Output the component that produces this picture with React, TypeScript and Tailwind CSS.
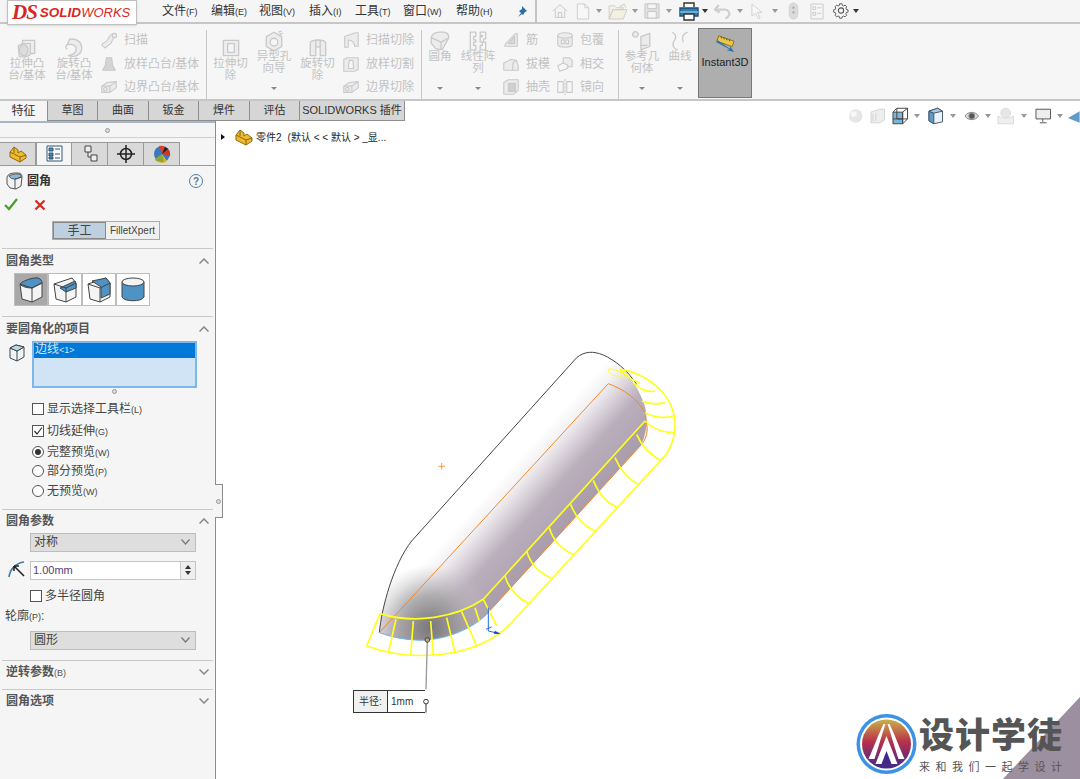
import type { ReactNode } from "react";

const F = "#c9c9c9";
const FILL = "#ececec";

// faded ribbon icons
const Glyph = ({ kind, size = 20 }: { kind: string; size?: number }) => {
  const p = { fill: FILL, stroke: F, strokeWidth: 1.2, strokeLinejoin: "round" as const };
  return (
    <svg width={size} height={size} viewBox="0 0 20 20" className="shrink-0">
      {kind === "extrude" && (
        <g {...p}>
          <path d="M6 3h11v12H6z" />
          <path d="M2 8l4-2h7v10l-4 2H3z" />
          <ellipse cx="7" cy="12" rx="4" ry="5" fill="#dcdcdc" />
        </g>
      )}
      {kind === "revolve" && (
        <g {...p}>
          <path d="M6 2c7-1 11 3 11 8 0 6-6 9-12 7 5-1 7-3 7-6 0-3-3-5-8-4z" />
          <path d="M4 7c-2 1-2 3 0 4" fill="none" />
        </g>
      )}
      {kind === "sweep" && (
        <g {...p}>
          <path d="M2 16c0-4 6-3 7-7 1-3 3-6 7-6l2 4c-3 0-4 2-5 5-1 4-6 4-7 7z" />
          <circle cx="16" cy="5" r="2.4" />
        </g>
      )}
      {kind === "loft" && (
        <g {...p}>
          <path d="M7 3h6l1 8 3 6H3l3-6z" fill="#d4d4d4" />
        </g>
      )}
      {kind === "boundary" && (
        <g {...p}>
          <path d="M2 9l6-4 10-1v7l-7 5H2z" />
          <path d="M2 9h9l7-5M11 9v7" fill="none" />
          <circle cx="6" cy="12.500" r="2" />
        </g>
      )}
      {kind === "cut" && (
        <g {...p}>
          <path d="M3 3h14v14H3z" />
          <path d="M7 6h6v8H7z" fill="#f6f6f6" />
        </g>
      )}
      {kind === "hole" && (
        <g {...p}>
          <path d="M3 6l7-4 7 4v9l-7 4-7-4z" />
          <circle cx="10" cy="11" r="3.500" fill="#f6f6f6" />
          <path d="M14 2l3-1M15 4l3-1" fill="none" />
        </g>
      )}
      {kind === "revcut" && (
        <g {...p}>
          <path d="M3 5c2-3 12-3 14 0v12h-5V9H8v8H3z" />
          <path d="M8 3v6M12 3v6" fill="none" />
        </g>
      )}
      {kind === "sweepcut" && (
        <g {...p}>
          <path d="M3 18V6l12-4h3v15h-4c0-4-3-7-7-7v8z" />
        </g>
      )}
      {kind === "loftcut" && (
        <g {...p}>
          <path d="M2 5l4-2h12v13l-4 2H2z" />
          <path d="M8 6h4l1 9H7z" fill="#f6f6f6" />
        </g>
      )}
      {kind === "fillet" && (
        <g {...p}>
          <path d="M2 7c1-4 4-5 8-5h3c3 0 5 2 5 5L12 18l-6-1-4-5z" />
          <path d="M2 7l9 4 7-4M11 11v7" fill="none" />
        </g>
      )}
      {kind === "pattern" && (
        <g {...p} fill="none">
          <path d="M3 2h5v4H6v3h2v2H6v3h2v4H3zM12 2h5v6h-2v3h2v7h-5v-4h2v-3h-2V6h2V5h-2z" />
        </g>
      )}
      {kind === "rib" && (
        <g {...p}>
          <path d="M3 17h14V3h-2L4 14z" />
          <path d="M7 14l7-8v8z" fill="#d8d8d8" />
        </g>
      )}
      {kind === "draft" && (
        <g {...p}>
          <path d="M2 9l8-4 6 1 2 6v5H2z" />
          <path d="M12 9l4-3M12 9v8" fill="none" />
        </g>
      )}
      {kind === "shell" && (
        <g {...p}>
          <path d="M2 5l5-3h11v12l-5 4H2z" />
          <path d="M7 6h8v9H7z" fill="#cfcfcf" />
        </g>
      )}
      {kind === "wrap" && (
        <g {...p}>
          <path d="M2 5v10c0 4 16 4 16 0V5z" />
          <ellipse cx="10" cy="5" rx="8" ry="3" />
          <path d="M6 10h3v4H6zM11 10h3v4h-3z" fill="#f6f6f6" />
        </g>
      )}
      {kind === "intersect" && (
        <g {...p}>
          <path d="M8 3h7l3 3v7h-6l-4-3z" />
          <path d="M2 12l6-3 5 2v4l-9 3z" fill="#f6f6f6" />
        </g>
      )}
      {kind === "mirror" && (
        <g {...p}>
          <path d="M2 4h6v12H2zM12 4h6v12h-6z" fill="none" />
          <path d="M10 1v18" fill="none" strokeDasharray="3 1" />
        </g>
      )}
      {kind === "refgeo" && (
        <g {...p}>
          <circle cx="4" cy="4" r="2.500" />
          <path d="M9 6l8-3v12l-8 3z" />
          <path d="M9 14h6" fill="none" />
        </g>
      )}
      {kind === "curve" && (
        <g {...p} fill="none">
          <path d="M3 2c5 3 3 6 1 9-1 3 0 6 4 7M17 2c-4 1-6 5-4 9" />
        </g>
      )}
    </svg>
  );
};

const Big = ({ kind, lines, w, caret, high }: { kind: string; lines: string[]; w: number; caret?: boolean; high?: boolean }) => (
  <div className={`relative flex h-full shrink-0 flex-col items-center ${high ? "pt-[6px]" : "pt-[13px]"}`} style={{ width: w }}>
    <Glyph kind={kind} size={22} />
    <div className="mt-[-2px] flex flex-col items-center whitespace-nowrap text-[11.5px] leading-[12px] text-[#c2c2c2]">
      {lines.map((l) => (
        <div key={l}>{l}</div>
      ))}
    </div>
    {caret && <div className="absolute bottom-[9px] h-0 w-0 border-x-[3px] border-t-[3px] border-x-transparent border-t-[#888]" />}
  </div>
);

const Small = ({ kind, label }: { kind: string; label: string }) => (
  <div className="flex h-[24px] items-center gap-[6px] whitespace-nowrap text-[12px] text-[#c2c2c2]">
    <Glyph kind={kind} size={18} />
    <span>{label}</span>
  </div>
);

const SmallCol = ({ items, w }: { items: [string, string][]; w: number }) => (
  <div className="flex shrink-0 flex-col pt-[4px]" style={{ width: w }}>
    {items.map(([k, l]) => (
      <Small key={l} kind={k} label={l} />
    ))}
  </div>
);

const Sep = ({ mx }: { mx: string }) => <div className={`my-[6px] h-[70px] w-px shrink-0 bg-[#c8c8c8] ${mx}`} />;

const menus: [string, string, number][] = [
  ["文件", "(F)", 49],
  ["编辑", "(E)", 48],
  ["视图", "(V)", 50],
  ["插入", "(I)", 46],
  ["工具", "(T)", 48],
  ["窗口", "(W)", 53],
  ["帮助", "(H)", 60],
];

const tabs: [string, number][] = [
  ["草图", 50],
  ["曲面", 51],
  ["钣金", 50],
  ["焊件", 51],
  ["评估", 50],
  ["SOLIDWORKS 插件", 105],
];

const Caret = ({ c = "#999", ml = "ml-[6px]" }: { c?: string; ml?: string }) => (
  <svg width="6" height="4" viewBox="0 0 6 4" className={`shrink-0 ${ml}`}>
    <path d="M0 0h6L3 4z" fill={c} />
  </svg>
);

const PartIcon = ({ size = 18 }: { size?: number }) => (
  <svg width={size} height={size} viewBox="0 0 18 18" stroke="#8a6a10" strokeLinejoin="round">
    <path d="M1 7l4-5 4 3v3l3-2 5 4v3l-6 4-10-5z" fill="#f1b92d" />
    <path d="M1 7l10 5 6-2M11 12v5M5 2v6" fill="none" />
  </svg>
);

const QuickBar = () => (
  <div className="flex items-center">
    <svg width="16" height="16" viewBox="0 0 20 18" className="ml-[15px]" fill="#f2f2f2" stroke="#c9c9c9" strokeWidth="1.2">
      <path d="M1 9l9-8 9 8M4 7v10h12V7M8 17v-6h4v6" />
    </svg>
    <svg width="14" height="17" viewBox="0 0 14 18" className="ml-[8px]" fill="#f7f7f7" stroke="#cdcdcd">
      <path d="M1 1h8l4 4v12H1zM9 1v4h4" />
    </svg>
    <Caret />
    <svg width="21" height="17" viewBox="0 0 22 18" className="ml-[6px]" fill="#f3f0e2" stroke="#cdcdcd">
      <path d="M1 3h6l2 2h7v2H5l-4 10zM1 17l4-10h15l-4 10zM12 4l5-3 2 4" />
    </svg>
    <Caret ml="ml-[3px]" />
    <svg width="16" height="16" viewBox="0 0 17 17" className="ml-[6px]" fill="#e2e2e2" stroke="#c4c4c4">
      <path d="M1 1h15v15H1z" />
      <path d="M4 1h9v5H4zM4 9h9v7H4z" fill="#f6f6f6" />
    </svg>
    <Caret />
    <svg width="20" height="19" viewBox="0 0 20 19" className="ml-[7px]" fill="none" strokeWidth="1.4">
      <path d="M5 5V1h10v4" fill="#fff" stroke="#333" />
      <path d="M1 6h18v8H1z" fill="#2f7fb5" stroke="#1e4f78" />
      <path d="M1 10h18" stroke="#8dc1e2" />
      <path d="M5 12h10v6H5z" fill="#fff" stroke="#333" />
    </svg>
    <Caret c="#333" ml="ml-[3px]" />
    <svg width="17" height="15" viewBox="0 0 18 16" className="ml-[6px]" fill="none" stroke="#cfcfcf" strokeWidth="2.400">
      <path d="M2 6h9c4 0 6 3 5 6-1 2-2 3-4 3" />
      <path d="M5 1L1 6l5 3" />
    </svg>
    <Caret />
    <svg width="12" height="16" viewBox="0 0 13 17" className="ml-[8px]" fill="#f8f8f8" stroke="#cfcfcf">
      <path d="M1 1l11 9H7l3 6-2 1-3-6-4 3z" />
    </svg>
    <Caret ml="ml-[9px]" />
    <svg width="11" height="18" viewBox="0 0 11 19" className="ml-[10px]" fill="#dcdcdc" stroke="#d0d0d0">
      <rect x="1" y="1" width="9" height="17" rx="4.500" />
      <circle cx="5.500" cy="6" r="1.500" fill="#aaa" />
      <circle cx="5.500" cy="11" r="1.500" fill="#aaa" />
    </svg>
    <svg width="14" height="17" viewBox="0 0 15 18" className="ml-[11px]" fill="#f5f5f5" stroke="#c9c9c9">
      <path d="M1 1h13v16H1zM3 4h3v3H3zM8 5h4M3 10h3v3H3zM8 11h4" />
    </svg>
    <svg width="16" height="16" viewBox="0 0 18 18" className="ml-[9px]" fill="none" stroke="#555" strokeWidth="1.200">
      <path d="M7.500 1h3l.4 2 1.800.8 1.700-1.100 2.100 2.100-1.100 1.700.8 1.800 2 .4v3l-2 .4-.8 1.800 1.100 1.700-2.100 2.100-1.700-1.100-1.800.8-.4 2h-3l-.4-2-1.800-.8-1.700 1.100-2.100-2.100 1.100-1.700-.8-1.800-2-.4v-3l2-.4.8-1.800-1.100-1.700 2.100-2.100 1.700 1.100 1.800-.8z" transform="scale(.88) translate(1 0)" />
      <circle cx="9" cy="8.500" r="3" />
    </svg>
    <Caret c="#333" ml="ml-[4px]" />
  </div>
);

const Section = ({ title, open = true, children }: { title: ReactNode; open?: boolean; children?: ReactNode }) => (
  <div className="mx-[2px] border-t border-[#c9c9c9]">
    <div className="flex h-[23px] items-center justify-between pl-[4px] pr-[4px] text-[12px] font-bold text-[#555]">
      <span>{title}</span>
      <svg width="10" height="6" viewBox="0 0 10 6" fill="none" stroke="#888" strokeWidth="1.500">
        <path d={open ? "M0.500 5.500L5 1l4.500 4.500" : "M0.500 0.500L5 5l4.500-4.500"} />
      </svg>
    </div>
    {children}
  </div>
);

const Check = ({ checked, label, sub, className = "" }: { checked?: boolean; label: string; sub?: string; className?: string }) => (
  <div className={`flex items-center gap-[3px] text-[12px] text-[#444] ${className}`}>
    <div className="flex h-[12px] w-[12px] items-center justify-center border border-[#555] bg-white">
      {checked && (
        <svg width="10" height="10" viewBox="0 0 10 10" fill="none" stroke="#333" strokeWidth="1.200">
          <path d="M1.500 5l2.500 3 5-6.500" />
        </svg>
      )}
    </div>
    <span>
      {label}
      {sub && <span className="text-[9px]">{sub}</span>}
    </span>
  </div>
);

const Radio = ({ checked, label, sub }: { checked?: boolean; label: string; sub: string }) => (
  <div className="flex h-[19.5px] items-center gap-[3px] text-[12px] text-[#444]">
    <div className="flex h-[12px] w-[12px] items-center justify-center rounded-full border border-[#555] bg-white">
      {checked && <div className="h-[6px] w-[6px] rounded-full bg-[#333]" />}
    </div>
    <span>
      {label}
      <span className="text-[9px]">{sub}</span>
    </span>
  </div>
);

const Select = ({ label }: { label: string }) => (
  <div className="ml-[28px] flex h-[19px] w-[166px] items-center justify-between border border-[#bdbdbd] bg-[#dedede] pl-[3px] pr-[5px] text-[12px] text-[#444]">
    <span>{label}</span>
    <svg width="9" height="6" viewBox="0 0 9 6" fill="none" stroke="#777" strokeWidth="1.200">
      <path d="M0.500 0.500L4.500 5l4-4.500" />
    </svg>
  </div>
);

// fillet type thumbnails
const FilletType = ({ v, active }: { v: number; active?: boolean }) => (
  <div className={`flex h-[33px] w-[34px] items-center justify-center border border-[#bcbcbc] ${active ? "bg-[#a8a8a8]" : "bg-white"}`}>
    <svg width="26" height="27" viewBox="0 0 26 27" stroke="#444" strokeWidth="1" strokeLinejoin="round">
      {v === 3 ? (
        <g>
          <path d="M2 6v15c2 5 20 5 22 0V6z" fill="#4f92c4" />
          <ellipse cx="13" cy="6" rx="11" ry="4" fill="#f3f3f3" />
        </g>
      ) : (
        <g>
          <path d="M2 8l18-6 4 5v14l-10 5-10-3z" fill="#f4f4f4" />
          {v === 0 && <path d="M2 8c2-3 14-7 18-6 3 1 4 3 4 5l-10 5c-4 0-10-1-12-4z" fill="#4f92c4" />}
          {v === 1 && <path d="M8 12l15-7 1 3v4l-10 4z" fill="#4f92c4" />}
          {v === 2 && <path d="M6 5l14-3 4 5v11l-9 4V11z" fill="#4f92c4" />}
          <path d="M2 8l12 4v14M14 12l10-5" fill="none" />
        </g>
      )}
    </svg>
  </div>
);

const PanelTab = ({ children, active }: { children: ReactNode; active?: boolean }) => (
  <div className={`flex h-[23px] w-[36px] items-center justify-center border-r border-t border-[#9a9a9a] ${active ? "border-l bg-[#f5f5f5] pb-px" : "bg-[#d9d9d9]"}`}>
    {children}
  </div>
);

const LeftPanel = () => (
  <div className="flex w-[216px] shrink-0 flex-col border-r border-[#8c8c8c] bg-[#f5f5f5]">
    <div className="h-[2px] bg-[#a9b6c2]" />
    <div className="flex h-[15px] items-center justify-center border-b border-[#d0d0d0]">
      <div className="h-[5px] w-[5px] rounded-full border border-[#999] bg-[#ddd]" />
    </div>
    <div className="mt-[4px] flex border-b border-[#9a9a9a]">
      <PanelTab>
        <PartIcon />
      </PanelTab>
      <PanelTab active>
        <svg width="17" height="17" viewBox="0 0 17 17" stroke="#2c5572">
          <path d="M1 1h15v15H1z" fill="#fff" />
          <path d="M3 3h4v3H3zM3 8h4v3H3zM3 12h4v2H3z" fill="#4e8ab8" />
          <path d="M9 4h5M9 9h5M9 13h5" />
        </svg>
      </PanelTab>
      <PanelTab>
        <svg width="18" height="18" viewBox="0 0 18 18" stroke="#444" fill="#eee">
          <path d="M4 1h6v6H4zM7 7v5h3M10 10h6v6h-6z" />
        </svg>
      </PanelTab>
      <PanelTab>
        <svg width="18" height="18" viewBox="0 0 18 18" stroke="#222" strokeWidth="1.500" fill="none">
          <circle cx="9" cy="9" r="5.500" />
          <path d="M9 0v18M0 9h18" />
        </svg>
      </PanelTab>
      <PanelTab>
        <svg width="18" height="18" viewBox="0 0 18 18">
          <circle cx="9" cy="9" r="8" fill="#3c78c0" />
          <path d="M9 9L2 14a8 8 0 0 0 12 2z" fill="#e6b11e" />
          <path d="M9 9l8 2a8 8 0 0 0-5-9z" fill="#c73a2a" />
          <path d="M9 9L6 1a8 8 0 0 1 6 1z" fill="#d8432e" />
          <path d="M9 9l3-7 3 2z" fill="#222" />
          <path d="M9 9l-7 5 1 2 8 1z" fill="#5aa54a" opacity=".7" />
        </svg>
      </PanelTab>
    </div>

    <div className="flex h-[28px] items-center justify-between pl-[6px] pr-[12px] pt-[2px] text-[12px] font-bold text-[#333]">
      <div className="flex items-center gap-[3px]">
        <svg width="18" height="18" viewBox="0 0 18 18" stroke="#555" strokeLinejoin="round">
          <path d="M1 5c1-3 4-4 8-4h3c3 0 4 2 4 4l-1 9-5 3-6-1-3-4z" fill="#f2f2f2" />
          <path d="M3 4c3-2 10-3 12-1 1 2-3 4-6 4-3 0-5-1-6-3z" fill="#8ab8da" />
          <path d="M9 7v10M9 7l7-2" fill="none" />
        </svg>
        <span>圆角</span>
      </div>
      <div className="flex h-[14px] w-[14px] items-center justify-center rounded-full border-[1.500px] border-[#5a7c96] text-[10px] font-bold text-[#5a7c96]">?</div>
    </div>
    <div className="flex h-[21px] items-center gap-[16px] pl-[4px]">
      <svg width="14" height="13" viewBox="0 0 14 13" fill="none" stroke="#46a02a" strokeWidth="2.200">
        <path d="M1 7l4 4 8-10" />
      </svg>
      <svg width="12" height="12" viewBox="0 0 12 12" fill="none" stroke="#d8281c" strokeWidth="2.200">
        <path d="M1.500 1.500l9 9M10.500 1.500l-9 9" />
      </svg>
    </div>
    <div className="mb-[8px] ml-[52px] mt-[6px] flex h-[19px] w-[108px] border border-[#aaa] text-[#444]">
      <div className="flex w-[53px] items-center justify-center border border-[#888] bg-[#bed0e0] text-[12px]">手工</div>
      <div className="flex flex-1 items-center justify-center bg-[#f0f0f0] text-[10px]">FilletXpert</div>
    </div>

    <Section title="圆角类型">
      <div className="mb-[10px] ml-[12px] mt-[1px] flex">
        <FilletType v={0} active />
        <FilletType v={1} />
        <FilletType v={2} />
        <FilletType v={3} />
      </div>
    </Section>

    <Section title="要圆角化的项目">
      <div className="mt-[1px] flex pl-[7px]">
        <svg width="16" height="18" viewBox="0 0 16 18" className="mt-[3px]" stroke="#444" strokeLinejoin="round">
          <path d="M1 4l6-3 8 2v10l-7 4-7-3z" fill="#eef4f8" />
          <path d="M1 4l7 3v10M8 7l7-4" fill="none" />
          <path d="M1 4l6-3 8 2-7 4z" fill="#b8d8ec" />
        </svg>
        <div className="ml-[7px] h-[47px] w-[165px] border-2 border-[#7db6e8] bg-[#d1e4f6]">
          <div className="h-[15px] bg-[#0078d7] pl-[1px] text-[12px] leading-[13px] text-[#d5e8f8]">
            边线<span className="text-[9px]">&lt;1&gt;</span>
          </div>
        </div>
      </div>
      <div className="my-[1px] ml-[110px] h-[5px] w-[5px] rounded-full border border-[#999] bg-[#ddd]" />
      <Check label="显示选择工具栏" sub="(L)" className="ml-[30px] mt-[5px] h-[20px]" />
      <Check checked label="切线延伸" sub="(G)" className="ml-[30px] mt-[1px] h-[22px]" />
      <div className="ml-[30px] pb-[8px]">
        <Radio checked label="完整预览" sub="(W)" />
        <Radio label="部分预览" sub="(P)" />
        <Radio label="无预览" sub="(W)" />
      </div>
    </Section>

    <Section title="圆角参数">
      <Select label="对称" />
      <div className="mt-[9px] flex items-center pl-[6px]">
        <svg width="18" height="18" viewBox="0 0 18 18" fill="none" className="mr-[4px]">
          <path d="M1 16C2 8 8 2 16 1" stroke="#3d7ea6" strokeWidth="1.600" />
          <path d="M6 5l10 10M6 5h5M6 5v5" stroke="#222" strokeWidth="1.500" />
        </svg>
        <div className="flex h-[19px] w-[166px] items-center justify-between border border-[#c4c4c4] bg-white pl-[2px] text-[11px] text-[#5a3d7a]">
          <span>1.00mm</span>
          <div className="flex h-full w-[15px] flex-col items-center justify-center gap-[2px] border-l border-[#ccc] bg-[#eee]">
            <div className="h-0 w-0 border-x-[3px] border-b-[4px] border-x-transparent border-b-[#333]" />
            <div className="h-0 w-0 border-x-[3px] border-t-[4px] border-x-transparent border-t-[#333]" />
          </div>
        </div>
      </div>
      <Check label="多半径圆角" className="ml-[28px] mt-[6px] h-[20px]" />
      <div className="ml-[3px] mt-[1px] h-[18px] text-[12px] text-[#444]">
        轮廓<span className="text-[9px]">(P)</span>:
      </div>
      <div className="mb-[10px] mt-[6px]">
        <Select label="圆形" />
      </div>
    </Section>
    <Section open={false} title={<>逆转参数<span className="text-[9px] font-normal">(B)</span></>}>
      <div className="h-[5px]" />
    </Section>
    <Section open={false} title="圆角选项" />
  </div>
);

const Model = () => (
  <svg width="864" height="659" viewBox="216 120 864 659" className="absolute inset-0">
    <defs>
      <linearGradient id="body" gradientUnits="userSpaceOnUse" x1="430" y1="470" x2="640" y2="660">
        <stop offset="0" stopColor="#ffffff" />
        <stop offset=".15" stopColor="#f4f2f4" />
        <stop offset=".5" stopColor="#baaebc" />
        <stop offset="1" stopColor="#ad9fad" />
      </linearGradient>
      <radialGradient id="end" gradientUnits="userSpaceOnUse" cx="270" cy="860" r="190">
        <stop offset="0" stopColor="#767676" />
        <stop offset=".5" stopColor="#a6a4a6" stopOpacity=".85" />
        <stop offset="1" stopColor="#c8c4c8" stopOpacity="0" />
      </radialGradient>
      <linearGradient id="logoFill" x1="0" y1="0" x2="0" y2="1">
        <stop offset="0" stopColor="#c9b14a" />
        <stop offset=".45" stopColor="#b8314a" />
        <stop offset="1" stopColor="#3b2a8c" />
      </linearGradient>
    </defs>
    <g transform="translate(340 340) scale(.3333)" fill="none">
      <path d="M118 875C125 800 160 670 215 600L710 50C735 30 760 30 790 42C840 65 880 110 905 170C925 210 925 260 905 310L440 820C410 850 340 890 260 897C210 900 160 890 118 875Z" fill="url(#body)" />
      <path d="M118 875C125 800 160 670 215 600L710 50C735 30 760 30 790 42C840 65 880 110 905 170C925 210 925 260 905 310L440 820C410 850 340 890 260 897C210 900 160 890 118 875Z" fill="url(#end)" />
      <path d="M430 775L915 240L925 265L905 310L440 820C400 860 320 895 260 897C210 900 160 890 118 875L120 818C220 850 350 830 430 775Z" fill="#8d8290" opacity=".15" />
      <path d="M118 875C125 800 160 670 215 600L710 50C735 30 760 30 790 42C825 58 860 85 890 130" stroke="#444" strokeWidth="3" />
      <path d="M118 875L805 128C850 145 890 170 915 215M440 820L905 310C925 285 925 260 915 225" stroke="#f08a24" strokeWidth="3" />
      <path d="M118 875C160 890 210 900 260 897C330 892 400 860 440 820" stroke="#62b5e8" strokeWidth="3" />
      <g stroke="#ffff1e" strokeWidth="5" strokeLinejoin="round">
        <path d="M120 818C220 850 350 830 430 775L915 240" />
        <path d="M120 818L80 915C200 960 400 960 510 850L965 355C1010 310 1020 230 980 170C950 125 890 90 840 85" />
        <path d="M168 835L145 935M220 840L212 945M272 840L280 945M320 830L345 935M365 812L410 915M405 800L418 840M430 775L470 855" />
        <path d="M495 705C505 740 530 770 570 790M560 630C570 665 595 695 635 712M628 560C640 600 665 625 700 640M692 490C705 525 730 555 765 570M760 418C775 455 800 485 830 498M825 350C840 385 865 415 895 430M890 280C905 315 930 340 960 358" />
        <path d="M915 240C940 265 970 275 1003 275M915 215C945 230 975 232 1000 225M905 180C930 190 955 190 975 185M880 125C900 145 920 155 945 150M840 85C860 110 880 120 900 125" />
        <path d="M805 85C820 80 840 95 860 100C870 115 850 110 835 105C820 105 805 100 805 85Z" strokeWidth="3" />
      </g>
      <path d="M445 800V870M445 870L478 878M438 865L455 858" stroke="#1b6be0" strokeWidth="3" />
      <path d="M465 870L480 878L462 878Z" fill="#1540d0" stroke="#1540d0" />
      <path d="M262 897L258 1045" stroke="#9a9a9a" strokeWidth="4" />
      <circle cx="262" cy="897" r="7" fill="#c8a070" stroke="#333" strokeWidth="2.500" />
      <path d="M295 376h20M305 366v20" stroke="#f08a24" strokeWidth="2.500" />
      <path d="M258 1115V1088" stroke="#333" strokeWidth="3" />
      <circle cx="258" cy="1082" r="7" fill="#fff" stroke="#333" strokeWidth="3" />
    </g>
    <path d="M1003 779L1080 697" stroke="#d99a4a" strokeWidth="1" />
    <g transform="translate(886.500 743)">
      <circle r="30" fill="#3c93e4" />
      <circle r="26.500" fill="#fff" />
      <circle r="24.500" fill="url(#logoFill)" />
      <path d="M-3 -20C-8 -10 -13 4 -18 15H-12C-9 6 -5 -8 -1 -20ZM3 -20C8 -10 13 4 18 15H12C9 6 5 -8 1 -20Z" fill="#fff" />
      <path d="M0 -8L11 20H-11ZM0 12h0" fill="#fff" />
      <path d="M0 7L5 20H-5Z" fill="#3b2a8c" />
    </g>
  </svg>
);

const App = () => (
  <div className="flex h-[779px] w-[1080px] flex-col overflow-hidden bg-white [font-family:'Liberation_Sans','Noto_Sans_CJK_SC',sans-serif]">
    {/* title bar */}
    <div className="relative flex h-[22px] shrink-0 items-center bg-[#f5f5f5]">
      <div className="z-10 mb-[-3px] ml-[7px] flex h-[25px] w-[130px] items-center self-start border border-[#c0c0c0] bg-white pl-[4px] shadow-sm">
        <span className="text-[21px] font-bold italic leading-none tracking-[-1px] text-[#d9261c] [font-family:'Liberation_Serif',serif]">DS</span>
        <span className="ml-[3px] text-[13.5px] font-bold italic leading-none text-[#d9261c]">SOLID</span>
        <span className="text-[13px] italic leading-none text-[#d9261c]">WORKS</span>
      </div>
      <div className="ml-[25px] flex">
        {menus.map(([a, b, w]) => (
          <div key={a} className="whitespace-nowrap text-[12px] text-[#333]" style={{ width: w }}>
            {a}
            <span className="text-[9px]">{b}</span>
          </div>
        ))}
      </div>
      <svg width="11" height="11" viewBox="0 0 11 11" fill="#2f6ea5">
        <path d="M6 0l5 5-2 1-2 3-1-1-4 3 3-4-2-2 3-2z" />
      </svg>
      <div className="ml-[8px] h-[22px] w-[2px] bg-[#c4c4c4]" />
      <QuickBar />
    </div>

    {/* ribbon */}
    <div className="flex h-[79px] shrink-0 border-y-2 border-[#c6c6c6] bg-[#f6f6f6] pl-[8px]">
      <Big kind="extrude" lines={["拉伸凸", "台/基体"]} w={38} />
      <div className="w-[9px] shrink-0" />
      <Big kind="revolve" lines={["旋转凸", "台/基体"]} w={38} />
      <div className="w-[7px] shrink-0" />
      <SmallCol w={100} items={[["sweep", "扫描"], ["loft", "放样凸台/基体"], ["boundary", "边界凸台/基体"]]} />
      <Sep mx="mx-[6px]" />
      <Big kind="cut" lines={["拉伸切", "除"]} w={35} />
      <div className="w-[8px] shrink-0" />
      <Big kind="hole" lines={["异型孔", "向导"]} w={36} caret high />
      <div className="w-[8px] shrink-0" />
      <Big kind="revcut" lines={["旋转切", "除"]} w={35} />
      <div className="w-[7px] shrink-0" />
      <SmallCol w={73} items={[["sweepcut", "扫描切除"], ["loftcut", "放样切割"], ["boundary", "边界切除"]]} />
      <Sep mx="mx-[6px]" />
      <Big kind="fillet" lines={["圆角"]} w={24} caret high />
      <div className="w-[8px] shrink-0" />
      <Big kind="pattern" lines={["线性阵", "列"]} w={36} caret high />
      <div className="w-[6px] shrink-0" />
      <SmallCol w={54} items={[["rib", "筋"], ["draft", "拔模"], ["shell", "抽壳"]]} />
      <SmallCol w={57} items={[["wrap", "包覆"], ["intersect", "相交"], ["mirror", "镜向"]]} />
      <Sep mx="mx-[5px]" />
      <Big kind="refgeo" lines={["参考几", "何体"]} w={36} caret high />
      <div className="w-[8px] shrink-0" />
      <Big kind="curve" lines={["曲线"]} w={24} caret high />
      <div className="ml-[6px] mt-[4px] flex h-[70px] w-[54px] shrink-0 flex-col items-center border border-[#777] bg-[#aeaeae] pt-[5px]">
        <svg width="20" height="18" viewBox="0 0 22 20">
          <path d="M4 2l17 6-2 6L2 8z" fill="#e9c84a" stroke="#8a6a10" />
          <path d="M7 3v2M10 4v2M13 5v2M16 6v2" stroke="#5a4608" />
          <path d="M1 9l15 8-3 1 8 2-4-6-1 2L3 7z" fill="#2c74b0" />
        </svg>
        <span className="mt-[4px] text-[11px] leading-[13px] text-[#222]">Instant3D</span>
      </div>
    </div>

    {/* command manager tabs */}
    <div className="flex h-[20px] shrink-0 bg-white text-[12px]">
      <div className="flex w-[47px] items-center justify-center bg-[#f5f5f5] text-[#333]">特征</div>
      {tabs.map(([t, w]) => (
        <div key={t} className="flex items-center justify-center whitespace-nowrap border-b border-l border-[#8e8e8e] bg-[#d6d6d6] text-[11px] text-[#333]" style={{ width: w }}>
          {t}
        </div>
      ))}
      <div className="w-px border-l border-[#8e8e8e]" />
    </div>

    {/* work area */}
    <div className="flex min-h-0 flex-1">
      <LeftPanel />
      <div className="relative flex-1">
        <div className="absolute left-0 top-0 h-[659px] w-[864px]">
          <Model />
        </div>
        {/* feature tree flyout */}
        <div className="absolute left-[5px] top-[7px] flex items-center whitespace-pre text-[10px] text-[#222]">
          <div className="mr-[10px] h-0 w-0 border-y-[3px] border-l-[4px] border-y-transparent border-l-[#111]" />
          <span className="mr-[3px]">
            <PartIcon />
          </span>
          <span>零件2</span>
          <span className="ml-[6px]">(默认 &lt; &lt; 默认 &gt; _显...</span>
        </div>
        {/* heads-up toolbar */}
        <div className="absolute right-0 top-[-15px] flex h-[20px] w-[234px] items-center">
          <svg width="16" height="16" viewBox="0 0 16 16" className="ml-[2px]">
            <circle cx="8" cy="8" r="7" fill="#e6e6e6" />
            <circle cx="6" cy="6" r="3" fill="#f7f7f7" />
          </svg>
          <svg width="16" height="16" viewBox="0 0 16 16" className="ml-[6px]" fill="#eee" stroke="#d4d4d4">
            <path d="M1 4l9-3h5v11l-5 3H1z" />
            <path d="M3 6v7M6 5v8" />
          </svg>
          <svg width="17" height="18" viewBox="0 0 17 18" className="ml-[7px]" stroke="#444">
            <path d="M1 5h10v12H1z" fill="#7db6dc" />
            <path d="M1 5l4-4h11v11l-5 5M11 5l5-4M11 5v12M5 1v11h11M1 12h10" fill="none" />
          </svg>
          <Caret />
          <svg width="16" height="18" viewBox="0 0 16 18" className="ml-[8px]" stroke="#456">
            <path d="M1 4l9-3 5 3v11l-9 2-5-3z" fill="#eaf3fa" />
            <path d="M1 4l5 2v11l-5-3z" fill="#5d9cc9" />
            <path d="M1 4l5 2 9-2-5-3z" fill="#a9cfe8" />
          </svg>
          <Caret />
          <svg width="16" height="12" viewBox="0 0 16 12" className="ml-[8px]" stroke="#888" fill="#ddd">
            <path d="M1 6c3-5 11-5 14 0-3 5-11 5-14 0z" />
            <circle cx="8" cy="6" r="3" fill="#555" />
          </svg>
          <Caret />
          <svg width="18" height="18" viewBox="0 0 18 18" className="ml-[6px]" fill="#e6e6e6" stroke="#dcdcdc">
            <circle cx="9" cy="6" r="5" />
            <path d="M1 9l4 2h8l4-2v8H1z" fill="#efefef" />
          </svg>
          <Caret />
          <svg width="17" height="16" viewBox="0 0 17 16" className="ml-[8px]" stroke="#555" fill="#eee">
            <path d="M1 1h15v10H1z" />
            <path d="M8 11v3M5 15h7" fill="none" />
          </svg>
          <Caret />
          <svg width="12" height="14" viewBox="0 0 12 14" className="ml-[5px]" fill="#5d9cc9">
            <path d="M12 2L0 9l12 5z" />
          </svg>
        </div>
        {/* radius callout */}
        <div className="absolute left-[137px] top-[569px] flex h-[23px] w-[72px] border border-r-0 border-[#333] text-[10px] text-[#333]">
          <div className="flex w-[34px] items-center justify-center border-r border-[#333] bg-[#f0f0f0]">半径:</div>
          <div className="flex flex-1 items-center pl-[3px]">1mm</div>
        </div>
        {/* sash handle */}
        <div className="absolute left-[-1px] top-[363px] flex h-[34px] w-[8px] items-center justify-center border-y border-r border-[#8c8c8c] bg-[#f5f5f5]">
          <div className="h-[5px] w-[5px] rounded-full border border-[#999] bg-[#ddd]" />
        </div>
        {/* watermark */}
        <div className="absolute bottom-0 right-0 h-[82px] w-[77px] bg-[#9c8fa0] [clip-path:polygon(100%_0,100%_100%,0_100%)]" />
        <div className="absolute left-[703px] top-[596px] flex w-[150px] flex-col whitespace-nowrap">
          <div className="text-[35px] font-black leading-[38px] tracking-[1px] text-[#555]">设计学徒</div>
          <div className="mt-[5px] text-[11px] leading-[14px] tracking-[5.5px] text-[#555]">来和我们一起学设计</div>
        </div>
      </div>
    </div>
  </div>
);

export default App;
